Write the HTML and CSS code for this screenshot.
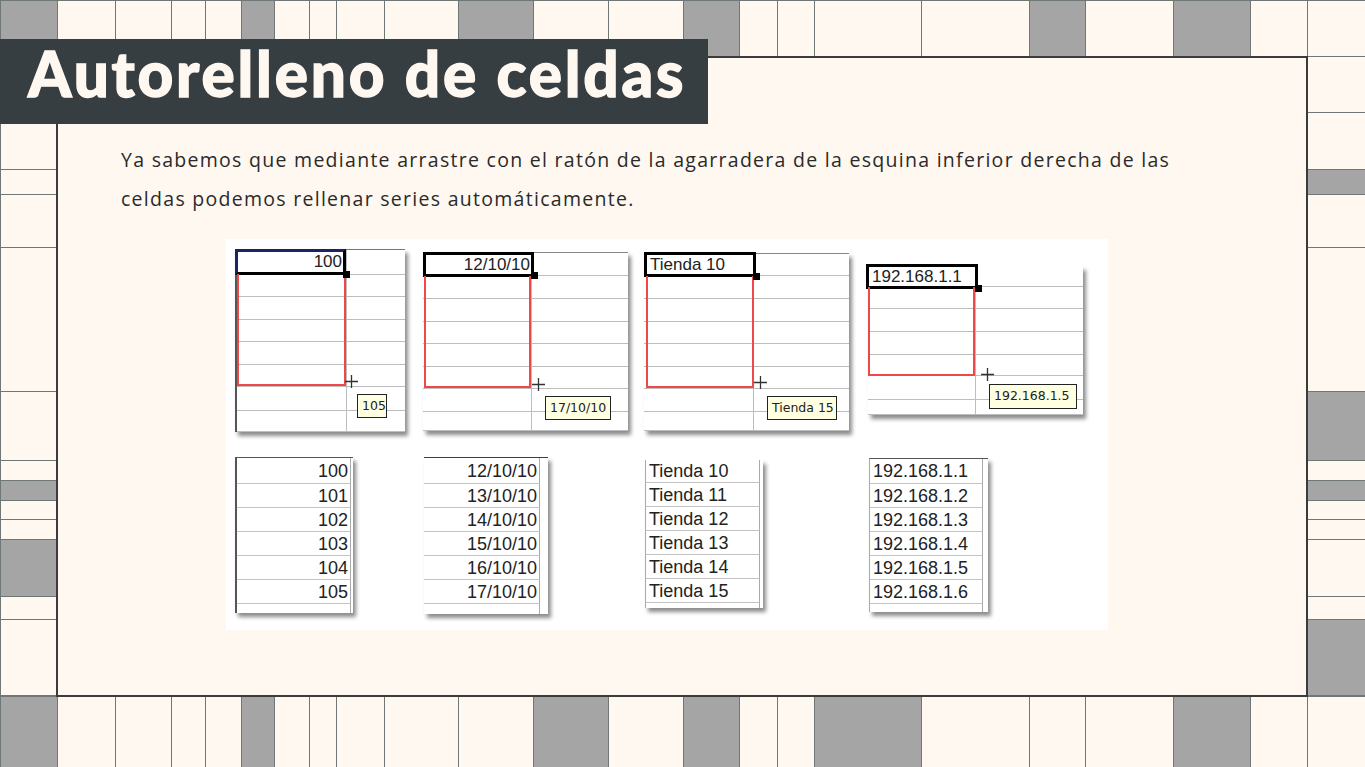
FILE: index.html
```html
<!doctype html>
<html lang="es">
<head>
	<meta charset="UTF-8">
	<title>Autorelleno de celdas</title>
	<link rel="stylesheet" href="styles.css">
</head>
<body>
	<div class="page">
		<div class="strip strip-top">
			<i class="g"></i><i></i><i></i><i></i><i></i><i class="g"></i><i></i><i></i><i></i><i></i><i class="g"></i><i></i>
			<i></i><i class="g"></i><i></i><i></i><i></i><i></i><i class="g"></i><i></i><i class="g"></i><i></i><i></i>
		</div>
		<div class="side side-left">
			<i></i><i></i><i></i><i></i><i></i><i></i><i></i><i class="g"></i><i></i><i></i><i class="g"></i><i></i><i></i>
		</div>
		<div class="main">
			<p class="intro">Ya sabemos que mediante arrastre con el ratón de la agarradera de la esquina inferior derecha de las celdas podemos rellenar series automáticamente.</p>
			<div class="figure">
				<div class="fig-row fig-top">
					<div class="sheet s1">
						<div class="r"><b></b><b></b></div><div class="r"><b></b><b></b></div><div class="r"><b></b><b></b></div><div class="r"><b></b><b></b></div>
						<div class="r"><b></b><b></b></div><div class="r"><b></b><b></b></div><div class="r"><b></b><b></b></div><div class="r"><b></b><b></b></div>
						<div class="sel num">100</div>
						<div class="range"></div>
						<span class="handle"></span>
						<svg class="cross" width="13" height="13"><path d="M6.5 0v13M0 6.5h13" stroke="#333" stroke-width="1.3"/></svg>
						<div class="tip">105</div>
					</div>
					<div class="sheet s2">
						<div class="r"><b></b><b></b></div><div class="r"><b></b><b></b></div><div class="r"><b></b><b></b></div><div class="r"><b></b><b></b></div>
						<div class="r"><b></b><b></b></div><div class="r"><b></b><b></b></div><div class="r"><b></b><b></b></div><div class="r"><b></b><b></b></div>
						<div class="sel num">12/10/10</div>
						<div class="range"></div>
						<span class="handle"></span>
						<svg class="cross" width="13" height="13"><path d="M6.5 0v13M0 6.5h13" stroke="#333" stroke-width="1.3"/></svg>
						<div class="tip">17/10/10</div>
					</div>
					<div class="sheet s3">
						<div class="r"><b></b><b></b></div><div class="r"><b></b><b></b></div><div class="r"><b></b><b></b></div><div class="r"><b></b><b></b></div>
						<div class="r"><b></b><b></b></div><div class="r"><b></b><b></b></div><div class="r"><b></b><b></b></div><div class="r"><b></b><b></b></div>
						<div class="sel">Tienda 10</div>
						<div class="range"></div>
						<span class="handle"></span>
						<svg class="cross" width="13" height="13"><path d="M6.5 0v13M0 6.5h13" stroke="#333" stroke-width="1.3"/></svg>
						<div class="tip">Tienda 15</div>
					</div>
					<div class="sheet s4">
						<div class="r"><b></b><b></b></div><div class="r"><b></b><b></b></div><div class="r"><b></b><b></b></div><div class="r"><b></b><b></b></div>
						<div class="r"><b></b><b></b></div><div class="r"><b></b><b></b></div><div class="r"><b></b><b></b></div>
						<div class="sel">192.168.1.1</div>
						<div class="range"></div>
						<span class="handle"></span>
						<svg class="cross" width="13" height="13"><path d="M6.5 0v13M0 6.5h13" stroke="#333" stroke-width="1.3"/></svg>
						<div class="tip">192.168.1.5</div>
					</div>
				</div>
				<div class="fig-row fig-bottom">
					<div class="list l1 num">
						<div>100</div><div>101</div><div>102</div><div>103</div><div>104</div><div>105</div><div class="end"></div>
					</div>
					<div class="list l2 num">
						<div>12/10/10</div><div>13/10/10</div><div>14/10/10</div><div>15/10/10</div><div>16/10/10</div><div>17/10/10</div><div class="end"></div>
					</div>
					<div class="list l3">
						<div>Tienda 10</div><div>Tienda 11</div><div>Tienda 12</div><div>Tienda 13</div><div>Tienda 14</div><div>Tienda 15</div><div class="end"></div>
					</div>
					<div class="list l4">
						<div>192.168.1.1</div><div>192.168.1.2</div><div>192.168.1.3</div><div>192.168.1.4</div><div>192.168.1.5</div><div>192.168.1.6</div><div class="end"></div>
					</div>
				</div>
			</div>
		</div>
		<div class="side side-right">
			<i></i><i></i><i class="g"></i><i></i><i></i><i class="g"></i><i></i><i class="g"></i><i></i><i></i><i></i><i></i><i class="g"></i>
		</div>
		<div class="strip strip-bottom">
			<i class="g"></i><i></i><i></i><i></i><i></i><i class="g"></i><i></i><i></i><i></i><i></i><i></i><i class="g"></i>
			<i></i><i class="g"></i><i></i><i></i><i class="g"></i><i></i><i></i><i></i><i class="g"></i><i></i><i></i>
		</div>
		<h1 class="title">Autorelleno de celdas</h1>
	</div>
</body>
</html>
```
FILE: styles.css
```css
*{
	margin: 0;
	padding: 0;
	box-sizing: border-box;
}
body{
	background: #fff8f1;
	width: 1365px;
	height: 767px;
	overflow: hidden;
	font-family: "Open Sans", sans-serif;
}
.page{
	position: relative;
	display: grid;
	grid-template-columns: 57px 1250px 58px;
	grid-template-rows: 57px 639px 71px;
	width: 1365px;
	height: 767px;
}

/* decorative border strips */
.strip{
	grid-column: 1 / 4;
	display: grid;
	grid-template-columns: 57px 58px 56px 34px 36px 33px 35px 27px 48px 74px 75px 75px 75px 56px 38px 37px 107px 108px 56px 88px 77px 57px 58px;
	border-left: 1px solid #6f7777;
}
.strip i{
	border-right: 1px solid #6f7777;
}
.strip-top i{
	border-top: 1px solid #6f7777;
	border-bottom: 1px solid #6f7777;
}
.strip-bottom i{
	border-top: 1px solid #6f7777;
}
.g{
	background: #a5a5a5;
}
.side{
	display: grid;
}
.side i{
	border-bottom: 1px solid #6f7777;
}
.side-left{
	grid-template-rows: 67px 46px 25px 53px 144px 69px 20px 20px 19px 20px 57px 23px 76px;
	border-left: 1px solid #6f7777;
}
.side-right{
	grid-template-rows: 56px 57px 25px 53px 144px 69px 20px 20px 19px 20px 57px 23px 76px;
}

.main{
	margin: -1px;
	border: 2px solid #3b3b3b;
	padding: 82px 0 0 63px;
	position: relative;
	z-index: 1;
	background: #fff8f1;
}
.title{
	position: absolute;
	left: 0;
	top: 39px;
	z-index: 2;
	width: 708px;
	height: 85px;
	padding: 0 0 17px 28px;
	display: flex;
	align-items: center;
	background: #373e42;
	color: #fff8f1;
	font-family: "Lato", sans-serif;
	font-weight: 900;
	font-size: 62px;
	letter-spacing: 2.8px;
	-webkit-text-stroke: 1.3px #fff8f1;
}
.intro{
	width: 1070px;
	font-size: 19.5px;
	letter-spacing: 1.28px;
	line-height: 39px;
	color: #2a2a2a;
}

/* spreadsheet picture */
.figure{
	width: 882px;
	height: 391px;
	margin: 21px 0 0 105px;
	background: #fff;
	font-family: "Liberation Sans", Arial, sans-serif;
	color: #222;
}
.fig-row{
	display: flex;
	align-items: flex-start;
}
.fig-top{
	height: 201px;
}
.sheet{
	position: relative;
	display: grid;
	grid-template-columns: 100%;
	background: #fff;
	box-shadow: 3px 4px 4px rgba(0,0,0,0.45);
}
.sheet .r{
	display: grid;
	grid-template-columns: var(--cols);
	border-bottom: 1px solid #bdbdbd;
}
.sheet .r b:first-child{
	border-right: 1px solid #bdbdbd;
}
.sheet .r:last-of-type{
	border-bottom: none;
}
.s1{
	--cols: 110px 60px;
	width: 170px;
	margin: 10px 0 0 9px;
	grid-template-rows: 25px 22px 23px 22px 23px 22px 24px 21px;
	border-left: 2px solid #555;
	border-top: 1px solid #777;
}
.s2{
	--cols: 109px 96px;
	width: 205px;
	margin: 13px 0 0 18px;
	grid-template-rows: 23px 23px 23px 22px 23px 22px 23px 19px;
	border-top: 1px solid #888;
}
.s3{
	--cols: 110px 95px;
	width: 205px;
	margin: 14px 0 0 16px;
	grid-template-rows: 22px 23px 23px 22px 23px 22px 23px 19px;
	border-top: 1px solid #888;
}
.s4{
	--cols: 108px 107px;
	width: 215px;
	margin: 27px 0 0 19px;
	grid-template-rows: 21px 22px 23px 23px 21px 24px 15px;
}
.sel{
	position: absolute;
	border: 3px solid #000;
	font-size: 17px;
	line-height: 19px;
	padding: 0 3px;
	white-space: nowrap;
}
.sel.num{
	text-align: right;
	padding-right: 1px;
}
.range{
	position: absolute;
	border: 2px solid #ee4848;
	border-top: none;
}
.handle{
	position: absolute;
	width: 7px;
	height: 7px;
	background: #000;
}
.cross{
	position: absolute;
}
.tip{
	position: absolute;
	height: 24px;
	border: 1px solid #222;
	background: #ffffe1;
	font-family: "DejaVu Sans", sans-serif;
	font-size: 12.5px;
	line-height: 22px;
	padding: 0 4px;
	white-space: nowrap;
}
.s1 .sel{ left: -2px; top: -1px; width: 111px; height: 26px; border-top-color: #1b2560; border-left-color: #1b2560; }
.s1 .range{ left: 0; top: 24px; width: 109px; height: 112px; }
.s1 .handle{ left: 106px; top: 21px; }
.s1 .cross{ left: 108px; top: 125px; }
.s1 .tip{ left: 120px; top: 144px; width: 30px; }

.s2 .sel{ left: 0; top: -1px; width: 111px; height: 25px; }
.s2 .range{ left: 1px; top: 23px; width: 107px; height: 112px; }
.s2 .handle{ left: 108px; top: 19px; }
.s2 .cross{ left: 109px; top: 125px; }
.s2 .tip{ left: 122px; top: 143px; width: 66px; }

.s3 .sel{ left: 0; top: -2px; width: 112px; height: 25px; }
.s3 .range{ left: 2px; top: 22px; width: 108px; height: 112px; }
.s3 .handle{ left: 109px; top: 19px; }
.s3 .cross{ left: 110px; top: 122px; }
.s3 .tip{ left: 123px; top: 142px; width: 70px; }

.s4 .sel{ left: -2px; top: -2px; width: 112px; height: 25px; }
.s4 .range{ left: 0; top: 21px; width: 107px; height: 89px; }
.s4 .handle{ left: 107px; top: 19px; }
.s4 .cross{ left: 113px; top: 102px; }
.s4 .tip{ left: 121px; top: 118px; width: 88px; height: 25px; }

/* filled results */
.list{
	background: #fff;
	border-top: 1px solid #555;
	box-shadow: 3px 4px 4px rgba(0,0,0,0.45);
	font-size: 18px;
}
.list div{
	height: 24px;
	line-height: 24px;
	border-bottom: 1px solid #c4c4c4;
	border-right: 1px solid #aaa;
	padding: 0 3px;
}
.list.num div{
	text-align: right;
	padding-right: 2px;
}
.list div:first-child{
	height: 26px;
	line-height: 26px;
}
.list .end{
	border-bottom: none;
	height: 9px;
}
.l1{
	width: 118px;
	margin: 17px 0 0 9px;
	padding-right: 2px;
	border-left: 2px solid #555;
}
.l2{
	width: 124px;
	margin: 17px 0 0 71px;
	padding-right: 8px;
	border-top-color: #2a3a7a;
}
.l2 .end{
	height: 10px;
}
.l3{
	width: 118px;
	margin: 20px 0 0 97px;
	padding-right: 3px;
	border-top: none;
	border-left: 1px solid #aaa;
}
.l3 div:first-child{
	height: 23px;
	line-height: 23px;
}
.l3 .end{
	height: 5px;
}
.l4{
	width: 119px;
	margin: 18px 0 0 106px;
	padding-right: 5px;
	border-left: 1px solid #aaa;
}
.l4 div:first-child{
	height: 25px;
	line-height: 25px;
}
.l4 .end{
	height: 8px;
}
```
